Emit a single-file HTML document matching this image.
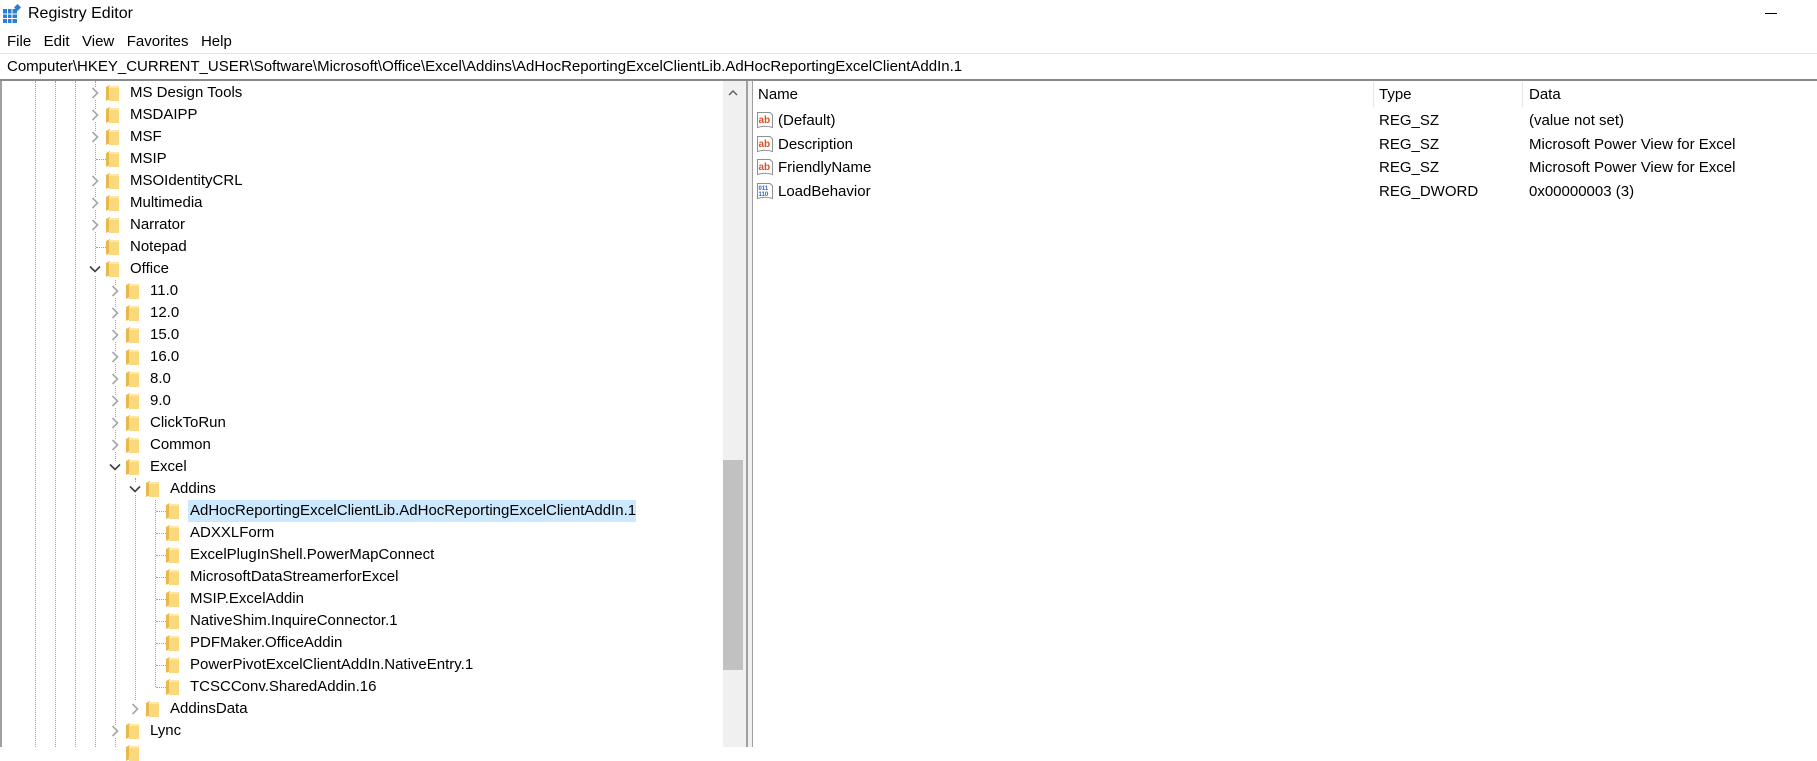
<!DOCTYPE html>
<html><head><meta charset="utf-8"><style>
*{margin:0;padding:0;box-sizing:border-box}
body{width:1817px;height:747px;overflow:hidden;background:#fff;font-family:"Liberation Sans",sans-serif;font-size:15px;color:#000;position:relative}
.a{position:absolute;white-space:nowrap}
.t{position:absolute;white-space:nowrap;line-height:22px;height:22px}
.f{position:absolute;width:13px;height:16px}
.vl{position:absolute;width:0;border-left:1px dotted #a0a0a0}
.hl{position:absolute;height:0;border-top:1px dotted #a0a0a0}
.c{position:absolute;width:12px;height:12px;margin-left:-1px;margin-top:-1px}
</style></head><body>
<svg class="a" style="left:2px;top:4px" width="20" height="20" viewBox="0 0 20 20"><rect x="1" y="5" width="14" height="14" fill="#2a7fd4"/><g stroke="#fff" stroke-width="1"><line x1="1" y1="10" x2="15" y2="10"/><line x1="1" y1="14.5" x2="15" y2="14.5"/><line x1="5.5" y1="5" x2="5.5" y2="19"/><line x1="10" y1="5" x2="10" y2="19"/></g><rect x="13" y="1" width="5" height="5" fill="#2a7fd4" transform="rotate(45 15.5 3.5)"/></svg>
<div class="a" style="left:28px;top:5px;font-size:16px">Registry Editor</div>
<div class="a" style="left:1765px;top:13px;width:12px;height:1px;background:#000"></div>
<div class="a" style="left:7px;top:33px;font-size:15px">File&nbsp;&nbsp; Edit&nbsp;&nbsp; View&nbsp;&nbsp; Favorites&nbsp;&nbsp; Help</div>
<div class="a" style="left:0;top:53px;width:1817px;height:1px;background:#e3e3e3"></div>
<div class="a" style="left:0;top:79px;width:1817px;height:2px;background:#8a8a8a"></div>
<div class="a" style="left:7px;top:58px;font-size:15px">Computer\HKEY_CURRENT_USER\Software\Microsoft\Office\Excel\Addins\AdHocReportingExcelClientLib.AdHocReportingExcelClientAddIn.1</div>
<div class="a" style="left:0;top:81px;width:2px;height:666px;background:#a0a0a0"></div>
<div class="vl" style="left:35px;top:81px;height:666px"></div>
<div class="vl" style="left:55px;top:81px;height:666px"></div>
<div class="vl" style="left:75px;top:81px;height:666px"></div>
<div class="vl" style="left:95px;top:81px;height:666px"></div>
<div class="vl" style="left:115px;top:280px;height:467px"></div>
<div class="vl" style="left:135px;top:478px;height:222px"></div>
<div class="vl" style="left:155px;top:500px;height:187px"></div>
<div class="hl" style="left:96px;top:159px;width:10px"></div>
<div class="hl" style="left:96px;top:247px;width:10px"></div>
<div class="hl" style="left:156px;top:511px;width:10px"></div>
<div class="hl" style="left:156px;top:533px;width:10px"></div>
<div class="hl" style="left:156px;top:555px;width:10px"></div>
<div class="hl" style="left:156px;top:577px;width:10px"></div>
<div class="hl" style="left:156px;top:599px;width:10px"></div>
<div class="hl" style="left:156px;top:621px;width:10px"></div>
<div class="hl" style="left:156px;top:643px;width:10px"></div>
<div class="hl" style="left:156px;top:665px;width:10px"></div>
<div class="hl" style="left:156px;top:687px;width:10px"></div>
<div class="a" style="left:188px;top:500px;width:448px;height:22px;background:#cce8ff"></div>

<svg width="0" height="0" style="position:absolute"><defs>
<g id="fo"><path d="M0 2 L4 0 L4 14 L0 16Z" fill="#e8b94a"/><rect x="3" y="1" width="10" height="15" fill="#f9d97c"/><rect x="3" y="1" width="10" height="2" fill="#fbe7a8"/></g>
<g id="cr"><path d="M3.5 1 L8.5 6 L3.5 11" fill="none" stroke="#a6a6a6" stroke-width="1.6"/></g>
<g id="cd"><path d="M1 3.5 L6 8.5 L11 3.5" fill="none" stroke="#404040" stroke-width="1.6"/></g>
</defs></svg>

<svg class="c" style="left:90px;top:88px;background:#fff"><use href="#cr"/></svg><svg class="f" style="left:106px;top:85px"><use href="#fo"/></svg><div class="t" style="left:130px;top:82px">MS Design Tools</div>
<svg class="c" style="left:90px;top:110px;background:#fff"><use href="#cr"/></svg><svg class="f" style="left:106px;top:107px"><use href="#fo"/></svg><div class="t" style="left:130px;top:104px">MSDAIPP</div>
<svg class="c" style="left:90px;top:132px;background:#fff"><use href="#cr"/></svg><svg class="f" style="left:106px;top:129px"><use href="#fo"/></svg><div class="t" style="left:130px;top:126px">MSF</div>
<svg class="f" style="left:106px;top:151px"><use href="#fo"/></svg><div class="t" style="left:130px;top:148px">MSIP</div>
<svg class="c" style="left:90px;top:176px;background:#fff"><use href="#cr"/></svg><svg class="f" style="left:106px;top:173px"><use href="#fo"/></svg><div class="t" style="left:130px;top:170px">MSOIdentityCRL</div>
<svg class="c" style="left:90px;top:198px;background:#fff"><use href="#cr"/></svg><svg class="f" style="left:106px;top:195px"><use href="#fo"/></svg><div class="t" style="left:130px;top:192px">Multimedia</div>
<svg class="c" style="left:90px;top:220px;background:#fff"><use href="#cr"/></svg><svg class="f" style="left:106px;top:217px"><use href="#fo"/></svg><div class="t" style="left:130px;top:214px">Narrator</div>
<svg class="f" style="left:106px;top:239px"><use href="#fo"/></svg><div class="t" style="left:130px;top:236px">Notepad</div>
<svg class="c" style="left:90px;top:264px;background:#fff"><use href="#cd"/></svg><svg class="f" style="left:106px;top:261px"><use href="#fo"/></svg><div class="t" style="left:130px;top:258px">Office</div>
<svg class="c" style="left:110px;top:286px;background:#fff"><use href="#cr"/></svg><svg class="f" style="left:126px;top:283px"><use href="#fo"/></svg><div class="t" style="left:150px;top:280px">11.0</div>
<svg class="c" style="left:110px;top:308px;background:#fff"><use href="#cr"/></svg><svg class="f" style="left:126px;top:305px"><use href="#fo"/></svg><div class="t" style="left:150px;top:302px">12.0</div>
<svg class="c" style="left:110px;top:330px;background:#fff"><use href="#cr"/></svg><svg class="f" style="left:126px;top:327px"><use href="#fo"/></svg><div class="t" style="left:150px;top:324px">15.0</div>
<svg class="c" style="left:110px;top:352px;background:#fff"><use href="#cr"/></svg><svg class="f" style="left:126px;top:349px"><use href="#fo"/></svg><div class="t" style="left:150px;top:346px">16.0</div>
<svg class="c" style="left:110px;top:374px;background:#fff"><use href="#cr"/></svg><svg class="f" style="left:126px;top:371px"><use href="#fo"/></svg><div class="t" style="left:150px;top:368px">8.0</div>
<svg class="c" style="left:110px;top:396px;background:#fff"><use href="#cr"/></svg><svg class="f" style="left:126px;top:393px"><use href="#fo"/></svg><div class="t" style="left:150px;top:390px">9.0</div>
<svg class="c" style="left:110px;top:418px;background:#fff"><use href="#cr"/></svg><svg class="f" style="left:126px;top:415px"><use href="#fo"/></svg><div class="t" style="left:150px;top:412px">ClickToRun</div>
<svg class="c" style="left:110px;top:440px;background:#fff"><use href="#cr"/></svg><svg class="f" style="left:126px;top:437px"><use href="#fo"/></svg><div class="t" style="left:150px;top:434px">Common</div>
<svg class="c" style="left:110px;top:462px;background:#fff"><use href="#cd"/></svg><svg class="f" style="left:126px;top:459px"><use href="#fo"/></svg><div class="t" style="left:150px;top:456px">Excel</div>
<svg class="c" style="left:130px;top:484px;background:#fff"><use href="#cd"/></svg><svg class="f" style="left:146px;top:481px"><use href="#fo"/></svg><div class="t" style="left:170px;top:478px">Addins</div>
<svg class="f" style="left:166px;top:503px"><use href="#fo"/></svg><div class="t" style="left:190px;top:500px">AdHocReportingExcelClientLib.AdHocReportingExcelClientAddIn.1</div>
<svg class="f" style="left:166px;top:525px"><use href="#fo"/></svg><div class="t" style="left:190px;top:522px">ADXXLForm</div>
<svg class="f" style="left:166px;top:547px"><use href="#fo"/></svg><div class="t" style="left:190px;top:544px">ExcelPlugInShell.PowerMapConnect</div>
<svg class="f" style="left:166px;top:569px"><use href="#fo"/></svg><div class="t" style="left:190px;top:566px">MicrosoftDataStreamerforExcel</div>
<svg class="f" style="left:166px;top:591px"><use href="#fo"/></svg><div class="t" style="left:190px;top:588px">MSIP.ExcelAddin</div>
<svg class="f" style="left:166px;top:613px"><use href="#fo"/></svg><div class="t" style="left:190px;top:610px">NativeShim.InquireConnector.1</div>
<svg class="f" style="left:166px;top:635px"><use href="#fo"/></svg><div class="t" style="left:190px;top:632px">PDFMaker.OfficeAddin</div>
<svg class="f" style="left:166px;top:657px"><use href="#fo"/></svg><div class="t" style="left:190px;top:654px">PowerPivotExcelClientAddIn.NativeEntry.1</div>
<svg class="f" style="left:166px;top:679px"><use href="#fo"/></svg><div class="t" style="left:190px;top:676px">TCSCConv.SharedAddin.16</div>
<svg class="c" style="left:130px;top:704px;background:#fff"><use href="#cr"/></svg><svg class="f" style="left:146px;top:701px"><use href="#fo"/></svg><div class="t" style="left:170px;top:698px">AddinsData</div>
<svg class="c" style="left:110px;top:726px;background:#fff"><use href="#cr"/></svg><svg class="f" style="left:126px;top:723px"><use href="#fo"/></svg><div class="t" style="left:150px;top:720px">Lync</div>
<svg class="f" style="left:126px;top:745px"><use href="#fo"/></svg>

<div class="a" style="left:723px;top:81px;width:20px;height:666px;background:#f0f0f0"></div>
<svg class="a" style="left:727px;top:88px" width="12" height="10"><path d="M2 7 L6 3 L10 7" fill="none" stroke="#606060" stroke-width="1.5"/></svg>
<div class="a" style="left:723px;top:460px;width:20px;height:210px;background:#c1c1c1"></div>
<div class="a" style="left:743px;top:81px;width:3px;height:666px;background:#f0f0f0"></div>
<div class="a" style="left:746px;top:81px;width:2px;height:666px;background:#a0a0a0"></div>
<div class="a" style="left:748px;top:81px;width:4px;height:666px;background:#f0f0f0"></div>
<div class="a" style="left:752px;top:81px;width:1px;height:666px;background:#a0a0a0"></div>

<div class="a" style="left:758px;top:86px">Name</div>
<div class="a" style="left:1373px;top:82px;width:1px;height:25px;background:#e5e5e5"></div>
<div class="a" style="left:1379px;top:86px">Type</div>
<div class="a" style="left:1522px;top:82px;width:1px;height:25px;background:#e5e5e5"></div>
<div class="a" style="left:1529px;top:86px">Data</div>

<svg width="0" height="0" style="position:absolute"><defs>
<g id="ab"><path d="M0.5 0.5 H13 L15.5 3 V15.5 Q8 13 0.5 15.5Z" fill="#fff" stroke="#909090"/><text x="1.5" y="11" font-family="Liberation Sans" font-weight="bold" font-size="10" fill="#d9512c">ab</text></g>
<g id="dw"><path d="M0.5 0.5 H13 L15.5 3 V15.5 Q8 13 0.5 15.5Z" fill="#fff" stroke="#909090"/><text x="1.5" y="7" font-family="Liberation Sans" font-weight="bold" font-size="6" fill="#2d5fc4">011</text><text x="1.5" y="13" font-family="Liberation Sans" font-weight="bold" font-size="6" fill="#2d5fc4">110</text></g>
</defs></svg>
<svg class="a" style="left:757px;top:112px" width="17" height="17"><use href="#ab"/></svg>
<div class="a" style="left:778px;top:112px">(Default)</div><div class="a" style="left:1379px;top:112px">REG_SZ</div><div class="a" style="left:1529px;top:112px">(value not set)</div>
<svg class="a" style="left:757px;top:136px" width="17" height="17"><use href="#ab"/></svg>
<div class="a" style="left:778px;top:136px">Description</div><div class="a" style="left:1379px;top:136px">REG_SZ</div><div class="a" style="left:1529px;top:136px">Microsoft Power View for Excel</div>
<svg class="a" style="left:757px;top:159px" width="17" height="17"><use href="#ab"/></svg>
<div class="a" style="left:778px;top:159px">FriendlyName</div><div class="a" style="left:1379px;top:159px">REG_SZ</div><div class="a" style="left:1529px;top:159px">Microsoft Power View for Excel</div>
<svg class="a" style="left:757px;top:183px" width="17" height="17"><use href="#dw"/></svg>
<div class="a" style="left:778px;top:183px">LoadBehavior</div><div class="a" style="left:1379px;top:183px">REG_DWORD</div><div class="a" style="left:1529px;top:183px">0x00000003 (3)</div>
</body></html>
